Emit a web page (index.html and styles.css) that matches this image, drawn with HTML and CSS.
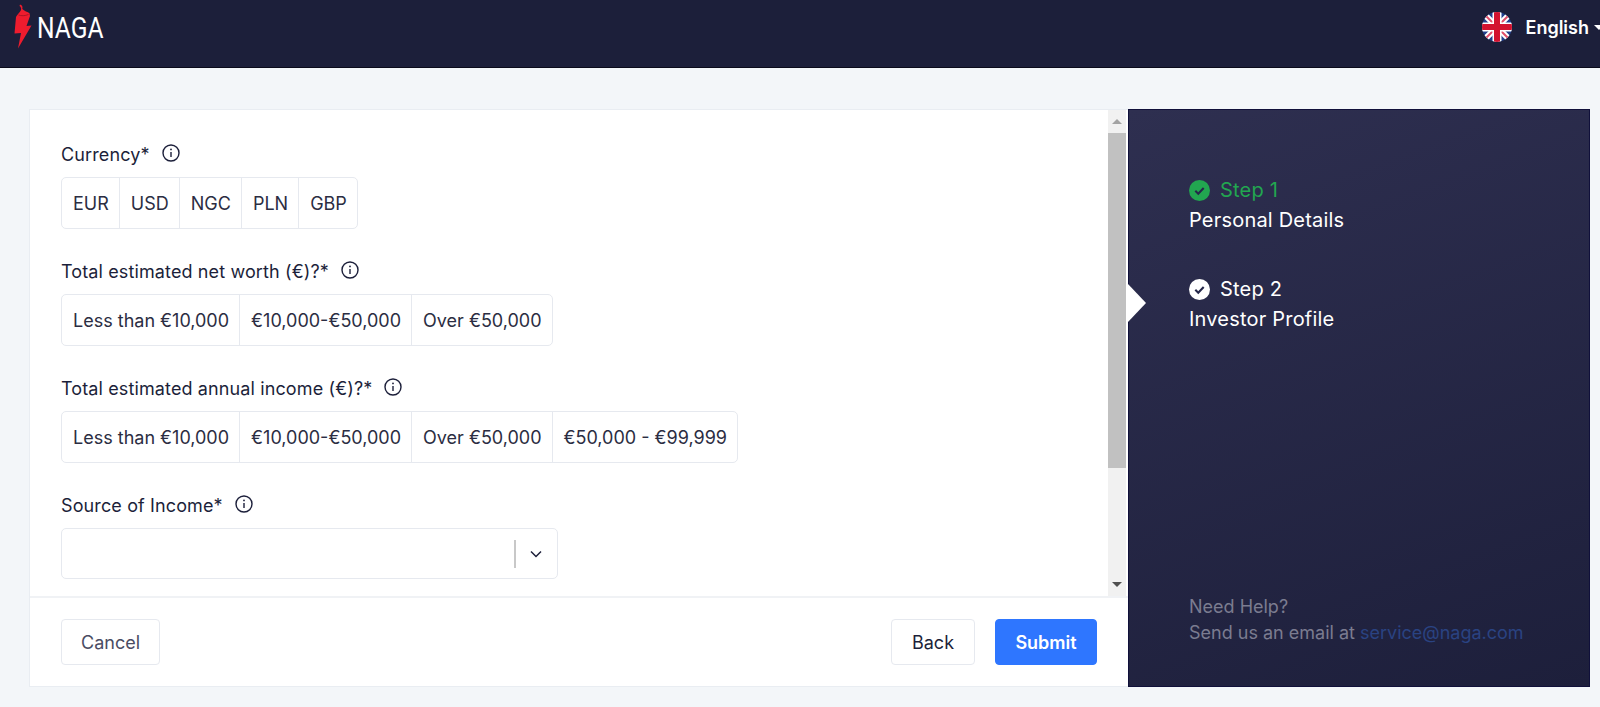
FILE: index.html
```html
<!DOCTYPE html>
<html lang="en">

<head>
    <meta charset="UTF-8">
    <meta name="viewport" content="width=device-width, initial-scale=1.0">
    <title>NAGA - Investor Profile</title>
    <link rel="stylesheet" href="styles.css">
</head>

<body>
    <header class="topbar">
        <div class="logo">
            <svg class="logo-pepper" width="22" height="46" viewBox="0 0 22 46">
                <path d="M7 0.5 C9.5 1 9.8 3 9.3 5 C11 7 15 8 16.5 9.2 L17 12 L13.5 22 L18.5 21.5 L5 44.5 L8 29 L1.5 29.5 L3 13 C4 10.5 7 8.5 8 6 C8.5 4 7.5 2.5 6.5 2 Z" fill="#ee1c2e"/>
                <path d="M5.5 11 C8 12 12 12 15.5 10.5" fill="none" stroke="#a01020" stroke-width="0.8"/>
            </svg>
            <span class="logo-text">NAGA</span>
        </div>
        <div class="lang">
            <svg class="flag" width="30" height="30" viewBox="0 0 30 30">
                <defs>
                    <clipPath id="flag-clip"><circle cx="15" cy="15" r="15"/></clipPath>
                </defs>
                <g clip-path="url(#flag-clip)">
                    <rect width="30" height="30" fill="#22408c"/>
                    <path d="M0 0 L30 30 M30 0 L0 30" stroke="#fff" stroke-width="6"/>
                    <path d="M0 0 L30 30 M30 0 L0 30" stroke="#e0506a" stroke-width="2"/>
                    <path d="M15 0 V30 M0 15 H30" stroke="#fff" stroke-width="9"/>
                    <path d="M15 0 V30 M0 15 H30" stroke="#d3122f" stroke-width="6"/>
                </g>
            </svg>
            <span class="lang-name">English</span>
            <span class="lang-caret"></span>
        </div>
    </header>

    <main class="page">
        <section class="card">
            <div class="card-top">
                <form class="fields">
                    <div class="field">
                        <div class="field-label">Currency*
                            <svg class="info" width="18" height="18" viewBox="0 0 18 18"><circle cx="9" cy="9" r="8" fill="none" stroke="#1c1f3a" stroke-width="1.4"/><path d="M9 8 V13" stroke="#1c1f3a" stroke-width="1.4"/><circle cx="9" cy="5.4" r="0.9" fill="#1c1f3a"/></svg>
                        </div>
                        <div class="segments">
                            <div class="segment">EUR</div>
                            <div class="segment">USD</div>
                            <div class="segment">NGC</div>
                            <div class="segment">PLN</div>
                            <div class="segment">GBP</div>
                        </div>
                    </div>
                    <div class="field">
                        <div class="field-label">Total estimated net worth (€)?*
                            <svg class="info" width="18" height="18" viewBox="0 0 18 18"><circle cx="9" cy="9" r="8" fill="none" stroke="#1c1f3a" stroke-width="1.4"/><path d="M9 8 V13" stroke="#1c1f3a" stroke-width="1.4"/><circle cx="9" cy="5.4" r="0.9" fill="#1c1f3a"/></svg>
                        </div>
                        <div class="segments">
                            <div class="segment">Less than €10,000</div>
                            <div class="segment">€10,000-€50,000</div>
                            <div class="segment">Over €50,000</div>
                        </div>
                    </div>
                    <div class="field">
                        <div class="field-label">Total estimated annual income (€)?*
                            <svg class="info" width="18" height="18" viewBox="0 0 18 18"><circle cx="9" cy="9" r="8" fill="none" stroke="#1c1f3a" stroke-width="1.4"/><path d="M9 8 V13" stroke="#1c1f3a" stroke-width="1.4"/><circle cx="9" cy="5.4" r="0.9" fill="#1c1f3a"/></svg>
                        </div>
                        <div class="segments">
                            <div class="segment">Less than €10,000</div>
                            <div class="segment">€10,000-€50,000</div>
                            <div class="segment">Over €50,000</div>
                            <div class="segment">€50,000 - €99,999</div>
                        </div>
                    </div>
                    <div class="field">
                        <div class="field-label">Source of Income*
                            <svg class="info" width="18" height="18" viewBox="0 0 18 18"><circle cx="9" cy="9" r="8" fill="none" stroke="#1c1f3a" stroke-width="1.4"/><path d="M9 8 V13" stroke="#1c1f3a" stroke-width="1.4"/><circle cx="9" cy="5.4" r="0.9" fill="#1c1f3a"/></svg>
                        </div>
                        <div class="select">
                            <span class="select-sep"></span>
                            <svg class="select-arrow" width="12" height="8" viewBox="0 0 12 8"><path d="M1 1.5 L6 6.5 L11 1.5" fill="none" stroke="#1c1f3a" stroke-width="1.5"/></svg>
                        </div>
                    </div>
                </form>
                <div class="scrollbar">
                    <span class="scroll-up"></span>
                    <div class="scroll-track"><div class="scroll-thumb"></div></div>
                    <span class="scroll-down"></span>
                </div>
            </div>
            <footer class="card-foot">
                <button class="btn btn-cancel" type="button">Cancel</button>
                <div class="foot-right">
                    <button class="btn" type="button">Back</button>
                    <button class="btn btn-submit" type="button">Submit</button>
                </div>
            </footer>
        </section>

        <aside class="side">
            <span class="side-arrow"></span>
            <div class="step step-done">
                <div class="step-head">
                    <svg width="21" height="21" viewBox="0 0 20 20"><circle cx="10" cy="10" r="10" fill="#22a650"/><path d="M6 10.3 L8.8 13 L14 7.6" fill="none" stroke="#25274a" stroke-width="2"/></svg>
                    <span>Step 1</span>
                </div>
                <div class="step-name">Personal Details</div>
            </div>
            <div class="step">
                <div class="step-head">
                    <svg width="21" height="21" viewBox="0 0 20 20"><circle cx="10" cy="10" r="10" fill="#fff"/><path d="M6 10.3 L8.8 13 L14 7.6" fill="none" stroke="#25274a" stroke-width="2"/></svg>
                    <span>Step 2</span>
                </div>
                <div class="step-name">Investor Profile</div>
            </div>
            <div class="help">
                <div>Need Help?</div>
                <div>Send us an email at <a class="help-link" href="#">service@naga.com</a></div>
            </div>
        </aside>
    </main>
</body>

</html>
```

FILE: styles.css
```css
* {
    margin: 0;
    padding: 0;
    box-sizing: border-box;
}

html, body {
    height: 100%;
    overflow: hidden;
}

body {
    background-color: #f3f6f9;
    font-family: Inter, "Liberation Sans", sans-serif;
    font-size: 18px;
    color: #1c1f3a;
}

.topbar {
    height: 68px;
    background-color: #1c1f3a;
    border-bottom: 1px solid #0a0a1a;
    display: flex;
    align-items: center;
    justify-content: space-between;
    padding-left: 13px;
}

.logo {
    display: flex;
    align-items: center;
    margin-top: -11px;
}

.logo-pepper {
    margin-bottom: 2px;
}

.logo-text {
    display: inline-block;
    font-family: Roboto, sans-serif;
    font-size: 30px;
    line-height: 30px;
    color: #fff;
    margin-left: 2px;
    transform: scaleX(0.82);
    transform-origin: left center;
}

.lang {
    display: flex;
    align-items: center;
    margin-right: -4px;
    margin-top: -13px;
}

.flag {
    margin-right: 13px;
}

.lang-name {
    font-weight: 600;
    color: #fff;
}

.lang-caret {
    width: 0;
    height: 0;
    margin-left: 5px;
    border-left: 5px solid transparent;
    border-right: 5px solid transparent;
    border-top: 5px solid #fff;
}

.page {
    display: flex;
    width: 1561px;
    height: 578px;
    margin: 41px 0 0 29px;
}

.card {
    width: 1099px;
    background-color: #fff;
    border: 1px solid #e9edf2;
    border-right: none;
    display: flex;
    flex-direction: column;
}

.card-top {
    flex: 1;
    min-height: 0;
    display: flex;
    border-bottom: 2px solid #f0f2f5;
}

.fields {
    flex: 1;
    padding: 32px 0 0 31px;
    overflow: hidden;
}

.field {
    margin-bottom: 30px;
}

.field-label {
    display: flex;
    align-items: center;
    height: 24px;
    padding-top: 2px;
    margin-bottom: 11px;
    line-height: 22px;
    letter-spacing: 0.12px;
    white-space: nowrap;
}

.info {
    margin-left: 12px;
    margin-top: -5px;
}

.segments {
    display: inline-flex;
    height: 52px;
    border: 1px solid #e6e9ef;
    border-radius: 5px;
}

.segment {
    display: flex;
    align-items: center;
    padding: 0 10px 0 11px;
    border-left: 1px solid #e6e9ef;
    color: #2b2d42;
}

.segment:first-child {
    border-left: none;
}

.select {
    width: 497px;
    height: 51px;
    margin-top: 2px;
    border: 1px solid #e6e9ef;
    border-radius: 5px;
    display: flex;
    align-items: center;
    justify-content: flex-end;
}

.select-sep {
    width: 2px;
    height: 28px;
    background-color: #c8c8c8;
}

.select-arrow {
    margin: 0 15px 0 14px;
}

.scrollbar {
    width: 20px;
    background-color: #f1f1f1;
    display: flex;
    flex-direction: column;
    border-right: 2px solid #fff;
}

.scroll-up,
.scroll-down {
    height: 23px;
    display: flex;
    align-items: center;
    justify-content: center;
}

.scroll-up::before {
    content: "";
    border-left: 5px solid transparent;
    border-right: 5px solid transparent;
    border-bottom: 5px solid #a3a3a3;
}

.scroll-down::before {
    content: "";
    border-left: 5px solid transparent;
    border-right: 5px solid transparent;
    border-top: 5px solid #505050;
}

.scroll-track {
    flex: 1;
}

.scroll-thumb {
    height: 335px;
    background-color: #c1c1c1;
}

.card-foot {
    height: 88px;
    display: flex;
    align-items: center;
    justify-content: space-between;
    padding: 0 31px;
}

.foot-right {
    display: flex;
    gap: 20px;
}

.btn {
    height: 46px;
    padding: 0 19px;
    background-color: #fff;
    border: 1px solid #e6e9ef;
    border-radius: 4px;
    font-family: inherit;
    font-size: 18px;
    color: #1c1f3a;
}

.btn-cancel {
    color: #4a4c63;
}

.foot-right .btn {
    min-width: 84px;
}

.foot-right .btn-submit {
    width: 102px;
    background-color: #2e76ff;
    border-color: #2e76ff;
    color: #fff;
    font-weight: 600;
}

.side {
    position: relative;
    flex: 1;
    display: flex;
    flex-direction: column;
    padding: 65px 0 0 60px;
    background: linear-gradient(160deg, #2e2f50, #1d1f3b);
    border: 1px solid #10103a;
    color: #fff;
    font-size: 20px;
    letter-spacing: 0.2px;
}

.side-arrow {
    position: absolute;
    left: -1px;
    top: 174px;
    border-top: 19px solid transparent;
    border-bottom: 19px solid transparent;
    border-left: 18px solid #fff;
}

.step {
    margin-bottom: 39px;
}

.step-head {
    display: flex;
    align-items: center;
    gap: 10px;
    height: 30px;
}

.step-done .step-head {
    color: #22a650;
}

.step-name {
    height: 30px;
    line-height: 30px;
}

.help {
    margin-top: auto;
    margin-bottom: 40px;
    font-size: 18px;
    line-height: 26px;
    letter-spacing: 0;
    color: #7b7c90;
}

.help-link {
    color: #2a4382;
    text-decoration: none;
}
```
